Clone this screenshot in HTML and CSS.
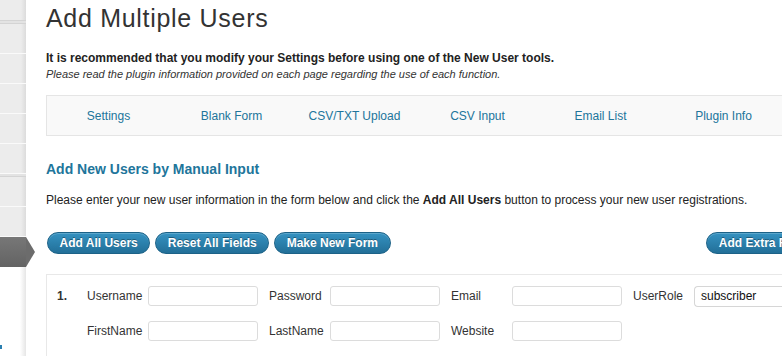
FILE: index.html
```html
<!DOCTYPE html>
<html>
<head>
<meta charset="utf-8">
<link rel="stylesheet" href="styles.css">
</head>
<body>
<div class="page">
  <aside class="sidebar">
    <div class="menu">
      <div class="mi mi-top"></div>
      <div class="mi mi-sep"></div>
      <div class="mi"></div>
      <div class="mi"></div>
      <div class="mi"></div>
      <div class="mi"></div>
      <div class="mi"></div>
      <div class="mi mi-sep"></div>
      <div class="mi"></div>
      <div class="mi"></div>
      <div class="mi mi-active"></div>
    </div>
    <div class="side-rest"><span class="side-link"></span></div>
  </aside>
  <main class="main">
    <h1 class="title">Add Multiple Users</h1>
    <p class="warn">It is recommended that you modify your Settings before using one of the New User tools.</p>
    <p class="note">Please read the plugin information provided on each page regarding the use of each function.</p>
    <nav class="tabs">
      <a class="tab">Settings</a>
      <a class="tab">Blank Form</a>
      <a class="tab">CSV/TXT Upload</a>
      <a class="tab">CSV Input</a>
      <a class="tab">Email List</a>
      <a class="tab">Plugin Info</a>
    </nav>
    <h2 class="subtitle">Add New Users by Manual Input</h2>
    <p class="intro">Please enter your new user information in the form below and click the <b>Add All Users</b> button to process your new user registrations.</p>
    <div class="buttons">
      <button class="btn">Add All Users</button>
      <button class="btn">Reset All Fields</button>
      <button class="btn">Make New Form</button>
      <button class="btn btn-right">Add Extra Fields</button>
    </div>
    <div class="formbox">
      <div class="grid">
        <span class="num">1.</span>
        <label class="lbl">Username</label><input class="inp" type="text">
        <label class="lbl">Password</label><input class="inp" type="text">
        <label class="lbl">Email</label><input class="inp" type="text">
        <label class="lbl">UserRole</label><div class="sel">subscriber</div>
        <span class="num"></span>
        <label class="lbl">FirstName</label><input class="inp" type="text">
        <label class="lbl">LastName</label><input class="inp" type="text">
        <label class="lbl">Website</label><input class="inp" type="text">
      </div>
    </div>
  </main>
</div>
</body>
</html>
```
FILE: styles.css
```css
html, body {
  margin: 0;
  padding: 0;
  background: #fff;
  overflow: hidden;
  width: 782px;
  height: 356px;
}
body {
  font-family: "Liberation Sans", Arial, Helvetica, sans-serif;
  color: #333;
  font-size: 12px;
}
.page {
  display: flex;
  width: 900px;
  height: 356px;
}
.sidebar {
  width: 26px;
  flex: none;
  display: flex;
  flex-direction: column;
}
.menu {
  display: flex;
  flex-direction: column;
  background: linear-gradient(to right, #ececec 0, #ececec 21px, #dcdcdc 26px);
}
.mi {
  height: 29px;
  border-bottom: 1px solid #fafafa;
  position: relative;
}
.mi-top { height: 20px; border-bottom: 1px solid #d4d4d4; }
.mi-sep { height: 2px; border-bottom: 1px solid #d4d4d4; background: #e3e3e3; }
.mi-active {
  height: 30px;
  border-bottom: 0;
  background: linear-gradient(#777, #636363);
}
.mi-active::after {
  content: "";
  position: absolute;
  left: 26px;
  top: 0;
  border-top: 15px solid transparent;
  border-bottom: 15px solid transparent;
  border-left: 9px solid #6c6c6c;
}
.side-rest {
  flex: 1;
  background: linear-gradient(to right, #fff 0, #fff 20px, #e6e6e6 26px);
  position: relative;
}
.side-link {
  position: absolute;
  left: 0;
  top: 78px;
  width: 2px;
  height: 4px;
  background: #2a7fb0;
}
.main {
  padding-left: 20px;
  width: 780px;
  flex: none;
}
.title {
  font-size: 25px;
  letter-spacing: 0.7px;
  font-weight: normal;
  margin: 4px 0 0;
  line-height: 28px;
  color: #333;
}
.warn {
  font-weight: bold;
  font-size: 12px;
  margin: 19px 0 0;
  line-height: 15px;
  color: #222;
}
.note {
  font-style: italic;
  font-size: 11px;
  margin: 1px 0 0;
  line-height: 14px;
  color: #333;
}
.tabs {
  margin-top: 14px;
  height: 41px;
  box-sizing: border-box;
  border: 1px solid #e5e5e5;
  border-right: 0;
  background: #f9f9f9;
  display: grid;
  grid-template-columns: repeat(6, 123px);
  align-items: center;
}
.tab {
  text-align: center;
  color: #21759b;
  font-size: 12px;
  line-height: 14px;
}
.subtitle {
  margin: 25px 0 0;
  font-size: 14px;
  line-height: 16px;
  color: #21759b;
  font-weight: bold;
}
.intro {
  margin: 16px 0 0;
  line-height: 15px;
  font-size: 12px;
  color: #222;
}
.buttons {
  margin-top: 24px;
  display: flex;
  gap: 5px;
  padding-left: 1px;
}
.btn {
  height: 22px;
  border-radius: 11px;
  border: 1px solid #1c6287;
  background: linear-gradient(#3592c1, #226f98);
  color: #fff;
  font-family: "Liberation Sans", Arial, sans-serif;
  font-weight: bold;
  font-size: 12px;
  padding: 0 11.5px;
  text-shadow: 0 -1px 0 rgba(0,0,0,0.35);
  box-shadow: inset 0 1px 0 rgba(255,255,255,0.2);
}
.btn-right { margin-left: auto; }
.formbox {
  margin-top: 20px;
  border: 1px solid #e8e8e8;
  border-right: 0;
  padding: 11px 0 14px 10px;
  height: 60px;
}
.grid {
  display: grid;
  grid-template-columns: 30px repeat(4, 61px 121px);
  grid-auto-rows: 20px;
  row-gap: 15px;
  align-items: center;
}
.num { font-weight: bold; font-size: 12px; }
.lbl { font-size: 12px; color: #333; }
.inp {
  width: 110px;
  height: 20px;
  box-sizing: border-box;
  border: 1px solid #dcdcdc;
  border-radius: 3px;
  margin: 0;
  padding: 0 4px;
  background: #fff;
}
.sel {
  width: 100px;
  height: 21px;
  box-sizing: border-box;
  border: 1px solid #d6d6d6;
  border-right: 0;
  border-radius: 4px 0 0 4px;
  padding: 2px 0 0 6px;
  font-size: 12px;
  color: #111;
  line-height: 15px;
  align-self: start;
}
```
